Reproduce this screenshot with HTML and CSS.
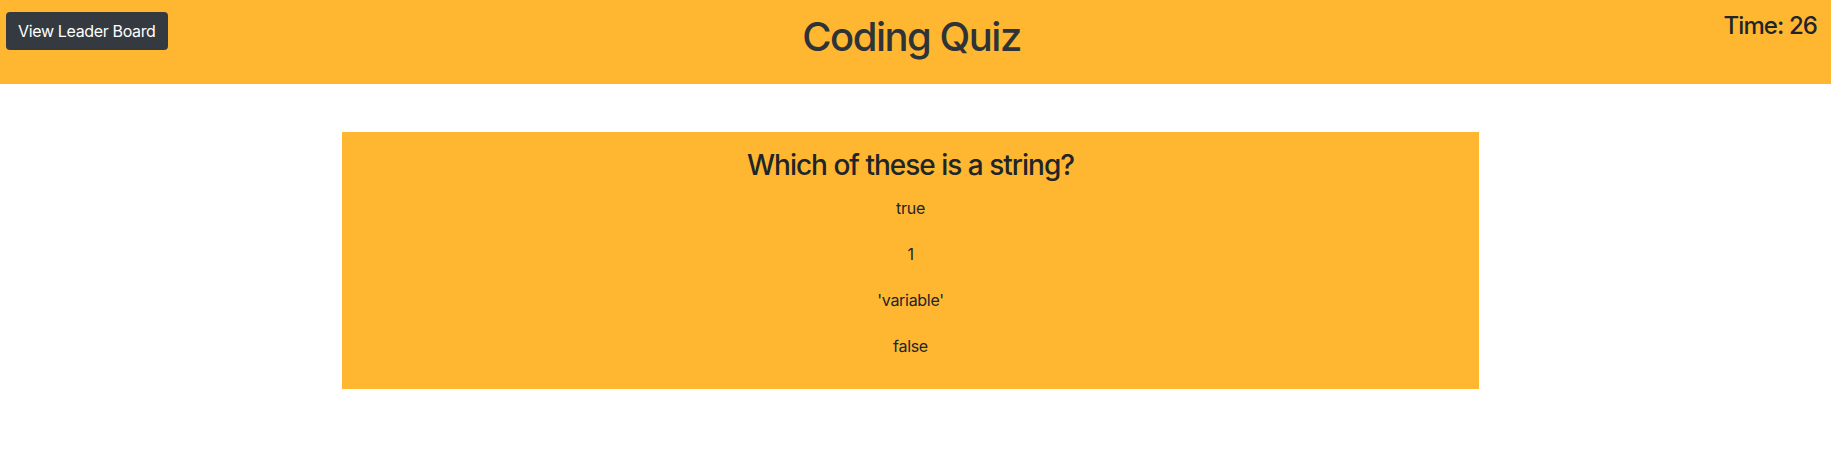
FILE: index.html
```html
<!DOCTYPE html>
<html lang="en">
<head>
<meta charset="utf-8">
<title>Coding Quiz</title>
<link rel="stylesheet" href="styles.css">
</head>
<body>
<header class="topbar">
  <div class="topbar-left"><button class="btn-leader">View Leader Board</button></div>
  <h1 class="title">Coding Quiz</h1>
  <div class="topbar-right"><h4 class="timer">Time: 26</h4></div>
</header>
<main class="main">
  <section class="card">
    <h3 class="question">Which of these is a string?</h3>
    <ul class="options">
      <li class="option">true</li>
      <li class="option">1</li>
      <li class="option">'variable'</li>
      <li class="option">false</li>
    </ul>
  </section>
</main>
</body>
</html>
```

FILE: styles.css
```css
* { box-sizing: border-box; }
html, body { margin: 0; padding: 0; }
body {
  font-family: Inter, "Liberation Sans", sans-serif;
  color: #212529;
  background: #ffffff;
  font-size: 16px;
  letter-spacing: -0.3px;
}
.topbar {
  background: #ffb732;
  height: 84px;
  display: grid;
  grid-template-columns: 1fr auto 1fr;
  align-items: start;
  padding: 0 14px 0 6px;
}
.topbar-left { display: flex; justify-content: flex-start; }
.topbar-right { display: flex; justify-content: flex-end; }
.btn-leader {
  margin-top: 12px;
  height: 38px;
  padding: 0 12px;
  background: #343a40;
  color: #ffffff;
  border: 0;
  border-radius: 4px;
  font-family: Inter, "Liberation Sans", sans-serif;
  font-size: 16px;
  letter-spacing: -0.35px;
  line-height: 24px;
}
.title {
  margin: 13px 0 0;
  font-size: 40px;
  font-weight: 500;
  line-height: 48px;
  letter-spacing: -1.5px;
  color: #2e3338;
}
.timer {
  margin: 11px 0 0;
  font-size: 24px;
  font-weight: 500;
  line-height: 29px;
  letter-spacing: -0.9px;
  color: #212529;
}
.main {
  display: flex;
  justify-content: flex-start;
  padding: 48px 0 0 342px;
}
.card {
  width: 1137px;
  height: 257px;
  background: #ffb732;
  padding: 16px 0 0;
  text-align: center;
}
.question {
  margin: 0;
  font-size: 28px;
  font-weight: 500;
  line-height: 34px;
  letter-spacing: -1px;
  color: #212529;
}
.options {
  list-style: none;
  margin: 14px 0 0;
  padding: 0;
}
.option {
  line-height: 24px;
  margin-bottom: 22px;
  color: #212529;
}
```
